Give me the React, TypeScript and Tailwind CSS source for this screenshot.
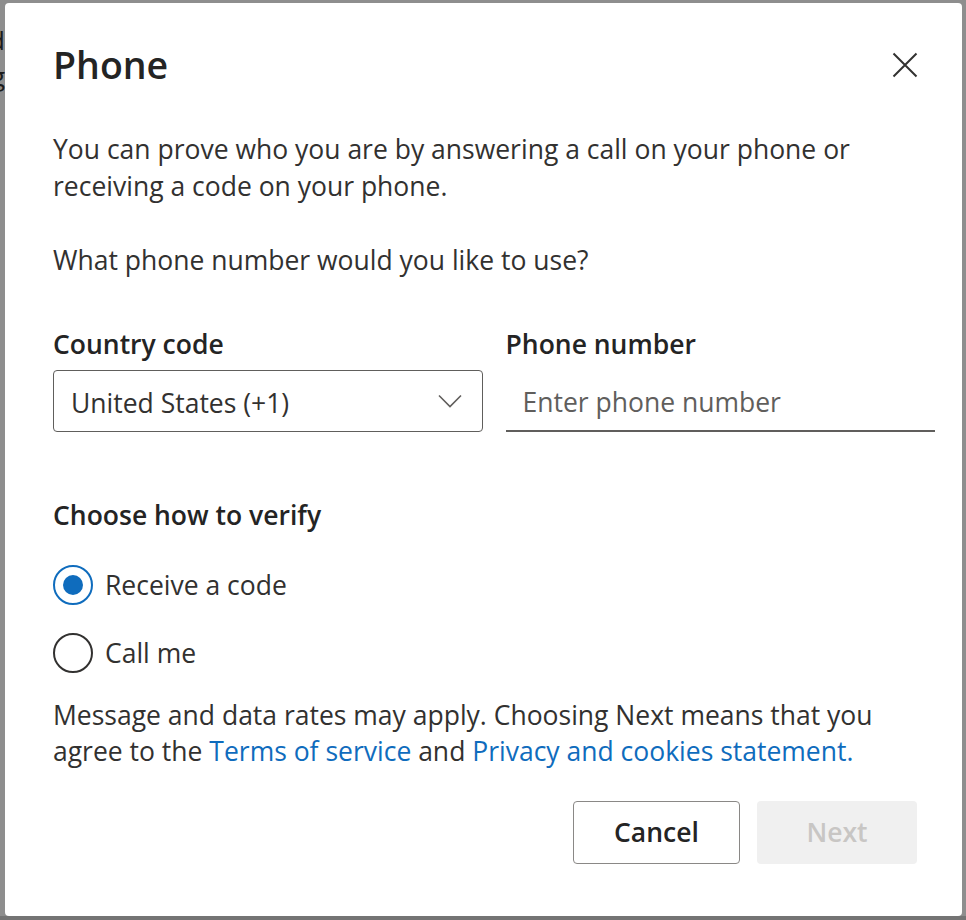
import React from 'react';

const font = { fontFamily: '"Open Sans", "Noto Sans", Arial, sans-serif' };

const Radio: React.FC<{ checked?: boolean; label: string }> = ({ checked, label }) => (
  <label className="flex items-center h-[40px] gap-[12px] cursor-pointer">
    <span
      className={`flex items-center justify-center w-[40px] h-[40px] rounded-full border-2 bg-white ${
        checked ? 'border-[#0f6cbd]' : 'border-[#323130]'
      }`}
    >
      {checked && <span className="w-[20px] h-[20px] rounded-full bg-[#0f6cbd]" />}
    </span>
    <span className="text-[26.5px] leading-[37px] text-[#323130]">{label}</span>
  </label>
);

const App: React.FC = () => {
  return (
    <div className="relative w-[966px] h-[920px] overflow-hidden bg-[#8e8e8e]" style={font}>
      {/* page behind the overlay */}
      <div className="flex flex-col w-[5px] overflow-hidden pt-[22px] text-[26px] leading-[36px] text-[#1c1c1c]">
        <div className="flex justify-end whitespace-nowrap">Add</div>
        <div className="flex justify-end whitespace-nowrap">ng</div>
      </div>
      <div className="absolute left-0 right-0 bottom-0 h-[4px] bg-[#747474]" />

      {/* dialog */}
      <div className="absolute left-[5px] top-[3px] w-[957px] h-[913px] bg-white rounded-[4px] pl-[48px] pr-[27px] pt-[36px] pb-[52px] flex flex-col">
        <div className="flex items-center justify-between h-[52px] pr-[18px]">
          <h1 className="text-[37.5px] leading-[52px] font-semibold text-[#242424]">Phone</h1>
          <button className="w-[40px] h-[40px] flex items-center justify-center -mr-[8px]">
            <svg width="26" height="26" viewBox="0 0 26 26" fill="none">
              <path d="M1.5 1.5 L24.5 24.5 M24.5 1.5 L1.5 24.5" stroke="#323130" strokeWidth="2" />
            </svg>
          </button>
        </div>

        <p className="mt-[40px] text-[26.5px] leading-[37px] text-[#323130]">
          You can prove who you are by answering a call on your phone or
          <br />
          receiving a code on your phone.
        </p>

        <p className="mt-[37px] text-[26.5px] leading-[37px] text-[#323130]">
          What phone number would you like to use?
        </p>

        <div className="mt-[47px] grid grid-cols-2 gap-[23px]">
          <div className="flex flex-col gap-[7px]">
            <span className="text-[26.5px] leading-[37px] font-semibold text-[#242424]">Country code</span>
            <div className="flex items-center justify-between h-[62px] border-[1.5px] border-[#605e5c] rounded-[4px] pl-[17px] pr-[20px]">
              <span className="text-[26.5px] leading-[37px] pt-[4px] text-[#323130]">United States (+1)</span>
              <svg width="24" height="14" viewBox="0 0 24 14" fill="none">
                <path d="M1 1.5 L12 12.5 L23 1.5" stroke="#605e5c" strokeWidth="1.6" />
              </svg>
            </div>
          </div>
          <div className="flex flex-col gap-[7px]">
            <span className="text-[26.5px] leading-[37px] font-semibold text-[#242424]">Phone number</span>
            <div className="flex items-center h-[62px] border-b-2 border-[#605e5c] pl-[17px]">
              <span className="text-[26.5px] leading-[37px] pt-[4px] text-[#605e5c]">Enter phone number</span>
            </div>
          </div>
        </div>

        <span className="mt-[65px] text-[26.5px] leading-[37px] font-semibold text-[#242424]">
          Choose how to verify
        </span>

        <div className="mt-[31px] flex flex-col gap-[28px]">
          <Radio checked label="Receive a code" />
          <Radio label="Call me" />
        </div>

        <p className="mt-[24px] text-[26.5px] leading-[36px] text-[#323130]">
          Message and data rates may apply. Choosing Next means that you
          <br />
          agree to the <a className="text-[#0f6cbd]">Terms of service</a> and{' '}
          <a className="text-[#0f6cbd]">Privacy and cookies statement.</a>
        </p>

        <div className="mt-auto flex justify-end gap-[17px] pr-[18px]">
          <button className="w-[167px] h-[63px] border-[1.5px] border-[#8a8886] rounded-[4px] text-[26.5px] font-semibold text-[#242424] bg-white">
            Cancel
          </button>
          <button className="w-[160px] h-[63px] rounded-[4px] text-[26.5px] font-semibold text-[#c8c6c4] bg-[#f0f0f0]">
            Next
          </button>
        </div>
      </div>
    </div>
  );
};

export default App;
